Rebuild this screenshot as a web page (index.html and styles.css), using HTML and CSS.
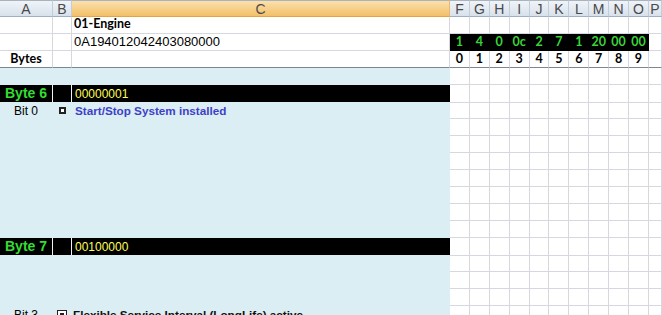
FILE: index.html
```html
<!DOCTYPE html>
<html lang="en">
<head>
    <meta charset="UTF-8">
    <title>01-Engine</title>
    <link rel="stylesheet" href="styles.css">
</head>
<body>
    <div class="sheet">
        <div class="row hdr">
            <div class="c">A</div><div class="c">B</div><div class="c sel">C</div>
            <div class="c">F</div><div class="c">G</div><div class="c">H</div><div class="c">I</div><div class="c">J</div>
            <div class="c">K</div><div class="c">L</div><div class="c">M</div><div class="c">N</div><div class="c">O</div><div class="c">P</div>
        </div>

        <!-- module header -->
        <div class="row">
            <div class="c"></div><div class="c"></div><div class="c title">01-Engine</div>
            <div class="c"></div><div class="c"></div><div class="c"></div><div class="c"></div><div class="c"></div><div class="c"></div>
            <div class="c"></div><div class="c"></div><div class="c"></div><div class="c"></div><div class="c"></div>
        </div>
        <div class="row">
            <div class="c"></div><div class="c"></div><div class="c code">0A194012042403080000</div>
            <div class="c hex">1</div><div class="c hex">4</div><div class="c hex">0</div><div class="c hex">0c</div><div class="c hex">2</div>
            <div class="c hex">7</div><div class="c hex">1</div><div class="c hex">20</div><div class="c hex">00</div><div class="c hex">00</div>
            <div class="c"></div>
        </div>
        <div class="row frz">
            <div class="c lbl">Bytes</div><div class="c"></div><div class="c"></div>
            <div class="c num">0</div><div class="c num">1</div><div class="c num">2</div><div class="c num">3</div><div class="c num">4</div>
            <div class="c num">5</div><div class="c num">6</div><div class="c num">7</div><div class="c num">8</div><div class="c num">9</div>
            <div class="c"></div>
        </div>

        <!-- byte 6 -->
        <div class="row">
            <div class="c blue"></div><div class="c blue"></div><div class="c blue"></div>
            <div class="c"></div><div class="c"></div><div class="c"></div><div class="c"></div><div class="c"></div><div class="c"></div>
            <div class="c"></div><div class="c"></div><div class="c"></div><div class="c"></div><div class="c"></div>
        </div>
        <div class="row">
            <div class="c blk byte">Byte 6</div><div class="c blk sep"></div><div class="c blk bin">00000001</div>
            <div class="c"></div><div class="c"></div><div class="c"></div><div class="c"></div><div class="c"></div><div class="c"></div>
            <div class="c"></div><div class="c"></div><div class="c"></div><div class="c"></div><div class="c"></div>
        </div>
        <div class="row">
            <div class="c blue bit">Bit 0</div><div class="c blue chk"><span class="box"></span></div><div class="c blue desc">Start/Stop System installed</div>
            <div class="c"></div><div class="c"></div><div class="c"></div><div class="c"></div><div class="c"></div><div class="c"></div>
            <div class="c"></div><div class="c"></div><div class="c"></div><div class="c"></div><div class="c"></div>
        </div>
        <div class="row">
            <div class="c blue"></div><div class="c blue"></div><div class="c blue"></div>
            <div class="c"></div><div class="c"></div><div class="c"></div><div class="c"></div><div class="c"></div><div class="c"></div>
            <div class="c"></div><div class="c"></div><div class="c"></div><div class="c"></div><div class="c"></div>
        </div>
        <div class="row">
            <div class="c blue"></div><div class="c blue"></div><div class="c blue"></div>
            <div class="c"></div><div class="c"></div><div class="c"></div><div class="c"></div><div class="c"></div><div class="c"></div>
            <div class="c"></div><div class="c"></div><div class="c"></div><div class="c"></div><div class="c"></div>
        </div>
        <div class="row">
            <div class="c blue"></div><div class="c blue"></div><div class="c blue"></div>
            <div class="c"></div><div class="c"></div><div class="c"></div><div class="c"></div><div class="c"></div><div class="c"></div>
            <div class="c"></div><div class="c"></div><div class="c"></div><div class="c"></div><div class="c"></div>
        </div>
        <div class="row">
            <div class="c blue"></div><div class="c blue"></div><div class="c blue"></div>
            <div class="c"></div><div class="c"></div><div class="c"></div><div class="c"></div><div class="c"></div><div class="c"></div>
            <div class="c"></div><div class="c"></div><div class="c"></div><div class="c"></div><div class="c"></div>
        </div>
        <div class="row">
            <div class="c blue"></div><div class="c blue"></div><div class="c blue"></div>
            <div class="c"></div><div class="c"></div><div class="c"></div><div class="c"></div><div class="c"></div><div class="c"></div>
            <div class="c"></div><div class="c"></div><div class="c"></div><div class="c"></div><div class="c"></div>
        </div>
        <div class="row">
            <div class="c blue"></div><div class="c blue"></div><div class="c blue"></div>
            <div class="c"></div><div class="c"></div><div class="c"></div><div class="c"></div><div class="c"></div><div class="c"></div>
            <div class="c"></div><div class="c"></div><div class="c"></div><div class="c"></div><div class="c"></div>
        </div>
        <div class="row">
            <div class="c blue"></div><div class="c blue"></div><div class="c blue"></div>
            <div class="c"></div><div class="c"></div><div class="c"></div><div class="c"></div><div class="c"></div><div class="c"></div>
            <div class="c"></div><div class="c"></div><div class="c"></div><div class="c"></div><div class="c"></div>
        </div>

        <!-- byte 7 -->
        <div class="row">
            <div class="c blk byte">Byte 7</div><div class="c blk sep"></div><div class="c blk bin">00100000</div>
            <div class="c"></div><div class="c"></div><div class="c"></div><div class="c"></div><div class="c"></div><div class="c"></div>
            <div class="c"></div><div class="c"></div><div class="c"></div><div class="c"></div><div class="c"></div>
        </div>
        <div class="row">
            <div class="c blue"></div><div class="c blue"></div><div class="c blue"></div>
            <div class="c"></div><div class="c"></div><div class="c"></div><div class="c"></div><div class="c"></div><div class="c"></div>
            <div class="c"></div><div class="c"></div><div class="c"></div><div class="c"></div><div class="c"></div>
        </div>
        <div class="row">
            <div class="c blue"></div><div class="c blue"></div><div class="c blue"></div>
            <div class="c"></div><div class="c"></div><div class="c"></div><div class="c"></div><div class="c"></div><div class="c"></div>
            <div class="c"></div><div class="c"></div><div class="c"></div><div class="c"></div><div class="c"></div>
        </div>
        <div class="row">
            <div class="c blue"></div><div class="c blue"></div><div class="c blue"></div>
            <div class="c"></div><div class="c"></div><div class="c"></div><div class="c"></div><div class="c"></div><div class="c"></div>
            <div class="c"></div><div class="c"></div><div class="c"></div><div class="c"></div><div class="c"></div>
        </div>
        <div class="row">
            <div class="c blue bit">Bit 3</div><div class="c blue chk"><span class="box on"></span></div><div class="c blue desc dark">Flexible Service Interval (LongLife) active</div>
            <div class="c"></div><div class="c"></div><div class="c"></div><div class="c"></div><div class="c"></div><div class="c"></div>
            <div class="c"></div><div class="c"></div><div class="c"></div><div class="c"></div><div class="c"></div>
        </div>
    </div>
</body>
</html>
```

FILE: styles.css
```css
body {
    margin: 0;
    background: #fff;
    overflow: hidden;
    font-family: "Liberation Sans", Arial, sans-serif;
    color: #000;
}
.sheet {
    width: 662px;
}
.row {
    display: grid;
    grid-template-columns: 53px 19px 378px repeat(10, 19.9px) 1fr;
    height: 17px;
}
.c {
    box-sizing: border-box;
    display: flex;
    align-items: flex-end;
    padding: 0 2px 1px;
    border-right: 1px solid #d5d9df;
    border-bottom: 1px solid #d5d9df;
    font-size: 12px;
    line-height: 14px;
    white-space: nowrap;
    min-width: 0;
}
/* column headers */
.hdr .c {
    justify-content: center;
    align-items: center;
    padding: 0;
    background: linear-gradient(#f0f4f9, #d8e1eb);
    border-top: 1px solid #a9b3be;
    border-right-color: #c3cdd8;
    border-bottom-color: #9fb0c2;
    font-size: 14px;
    color: #4a4a4a;
    overflow: hidden;
}
.hdr .sel {
    background: linear-gradient(#fbe0ac, #f3c069);
    border-bottom-color: #e3a448;
    border-right-color: #e8b870;
}
/* top block */
.title {
    font-family: Lato, "Open Sans", sans-serif;
    font-weight: bold;
    font-size: 12.5px;
    padding-bottom: 2px;
}
.code {
    font-size: 13px;
    padding-bottom: 1px;
}
.hex {
    justify-content: center;
    padding: 0 0 1px;
    background: #000;
    border-color: transparent;
    color: #3ad43a;
    font-family: Lato, "Open Sans", sans-serif;
    font-weight: bold;
    font-size: 12.5px;
}
.lbl, .num {
    justify-content: center;
    padding: 0 0 1px;
    font-family: Lato, "Open Sans", sans-serif;
    font-weight: bold;
    font-size: 12.5px;
}
.frz .c {
    border-bottom-color: #7c8793;
}
/* byte blocks */
.blue {
    background: #daeef3;
    border-color: transparent;
}
.blk {
    background: #000;
    border-color: transparent;
}
.blk.byte, .blk.sep {
    border-right-color: #f2f2f2;
}
.byte {
    justify-content: center;
    padding: 0 0 1px;
    color: #33dd33;
    font-weight: bold;
    font-size: 14px;
    line-height: 16px;
}
.bin {
    padding-left: 3px;
    color: #ffff55;
    font-size: 12px;
}
.bit {
    justify-content: center;
    padding: 0;
}
.chk {
    justify-content: center;
    padding: 0 0 4px;
}
.box {
    position: relative;
    display: block;
    width: 7px;
    height: 7px;
    box-sizing: border-box;
    border: 2px solid #222;
    background: #fff;
}
.box.on {
    width: 10px;
    height: 9px;
    border-width: 1px;
    margin-bottom: -1px;
}
.box.on::after {
    content: "";
    position: absolute;
    left: 2px;
    top: 2px;
    width: 4px;
    height: 3px;
    background: #222;
}
.desc {
    padding: 0 0 0 3px;
    color: #3f3fc8;
    font-weight: bold;
    font-size: 11.7px;
}
.desc.dark {
    padding-left: 1px;
    color: #111;
}
```
